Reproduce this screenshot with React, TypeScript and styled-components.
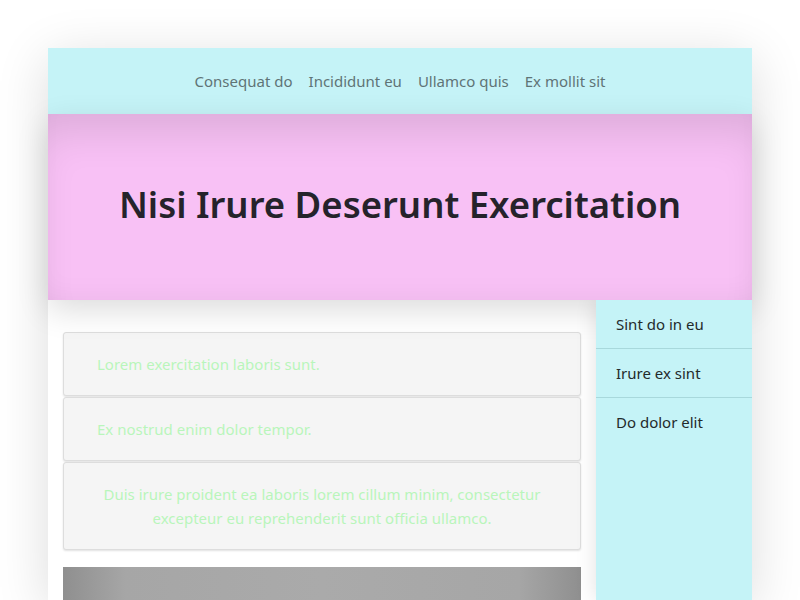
import styled, { createGlobalStyle } from 'styled-components';

const GlobalStyle = createGlobalStyle`
  body {
    margin: 0;
    background: #ffffff;
    font-family: "Noto Sans", "Open Sans", sans-serif;
  }
`;

const Page = styled.div`
  width: 704px;
  margin: 48px auto 0;
  box-shadow: 0 10px 50px rgba(0, 0, 0, 0.14);
`;

const NavBar = styled.nav`
  height: 66px;
  background: #c5f3f7;
  display: flex;
  justify-content: center;
  align-items: center;
  gap: 16px;
`;

const NavLink = styled.a`
  font-size: 15px;
  color: #5f7476;
  cursor: pointer;
`;

const Hero = styled.header`
  position: relative;
  z-index: 1;
  height: 186px;
  padding-bottom: 6px;
  box-sizing: border-box;
  background: #f8c1f5;
  display: flex;
  align-items: center;
  justify-content: center;
  box-shadow:
    inset 0 30px 40px -12px rgba(0, 0, 0, 0.11),
    inset 0 -14px 30px -14px rgba(0, 0, 0, 0.06),
    0 10px 30px rgba(0, 0, 0, 0.14);
`;

const Title = styled.h1`
  margin: 0;
  font-size: 36.5px;
  font-weight: 600;
  color: #25232b;
`;

const Body = styled.div`
  display: flex;
  height: 300px;
  overflow: hidden;
`;

const Main = styled.main`
  flex: 1;
  background: #ffffff;
  padding: 32px 15px 0;
  display: flex;
  flex-direction: column;
  gap: 1px;
`;

const Card = styled.div<{ $center?: boolean }>`
  background: #f5f5f5;
  border: 1px solid #dddddd;
  border-radius: 3px;
  box-shadow: 0 1px 2px rgba(0, 0, 0, 0.12);
  padding: 19px 33px;
  font-size: 15px;
  line-height: 24px;
  color: #b9f5bb;
  text-align: ${(p) => (p.$center ? 'center' : 'left')};
`;

const Banner = styled.div`
  margin-top: 16px;
  height: 60px;
  background: linear-gradient(to right, #8f8f8f, #a6a6a6 12%, #aaaaaa 50%, #a6a6a6 88%, #8f8f8f);
`;

const SideBar = styled.aside`
  position: relative;
  z-index: 2;
  width: 156px;
  background: #c5f3f7;
  box-shadow: 0 0 20px rgba(0, 0, 0, 0.12);
`;

const SideItem = styled.div<{ $last?: boolean }>`
  height: 48px;
  padding: 0 20px;
  display: flex;
  align-items: center;
  font-size: 15px;
  color: #232a2b;
  border-bottom: ${(p) => (p.$last ? 'none' : '1px solid #a8d8dc')};
`;

function App() {
  return (
    <>
      <GlobalStyle />
      <Page>
        <NavBar>
          <NavLink>Consequat do</NavLink>
          <NavLink>Incididunt eu</NavLink>
          <NavLink>Ullamco quis</NavLink>
          <NavLink>Ex mollit sit</NavLink>
        </NavBar>

        <Hero>
          <Title>Nisi Irure Deserunt Exercitation</Title>
        </Hero>

        <Body>
          <Main>
            <Card>Lorem exercitation laboris sunt.</Card>
            <Card>Ex nostrud enim dolor tempor.</Card>
            <Card $center>
              Duis irure proident ea laboris lorem cillum minim, consectetur excepteur eu reprehenderit sunt officia ullamco.
            </Card>
            <Banner />
          </Main>

          <SideBar>
            <SideItem>Sint do in eu</SideItem>
            <SideItem>Irure ex sint</SideItem>
            <SideItem $last>Do dolor elit</SideItem>
          </SideBar>
        </Body>
      </Page>
    </>
  );
}

export default App;
